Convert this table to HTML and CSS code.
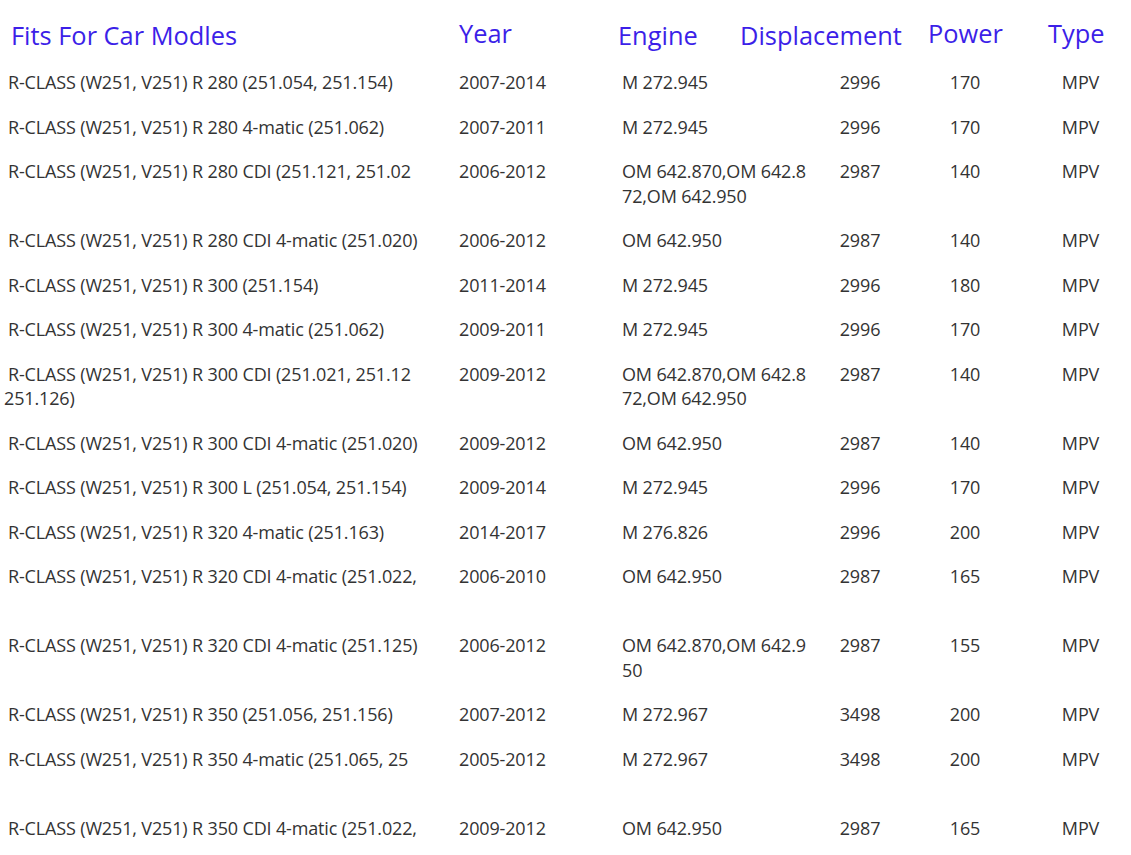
FILE: index.html
```html
<!DOCTYPE html>
<html>
<head>
<meta charset="utf-8">
<link rel="stylesheet" href="styles.css">
</head>
<body>
<div class="fits">
  <div class="head">
    <div class="h h-model">Fits For Car Modles</div>
    <div class="h h-year">Year</div>
    <div class="h h-engine">Engine</div>
    <div class="h h-disp">Displacement</div>
    <div class="h h-power">Power</div>
    <div class="h h-type">Type</div>
  </div>

  <div class="row"><div class="model">R-CLASS (W251, V251) R 280 (251.054, 251.154)</div><div class="year">2007-2014</div><div class="engine">M 272.945</div><div class="disp">2996</div><div class="power">170</div><div class="type">MPV</div></div>
  <div class="row"><div class="model">R-CLASS (W251, V251) R 280 4-matic (251.062)</div><div class="year">2007-2011</div><div class="engine">M 272.945</div><div class="disp">2996</div><div class="power">170</div><div class="type">MPV</div></div>
  <div class="row"><div class="model">R-CLASS (W251, V251) R 280 CDI (251.121, 251.02</div><div class="year">2006-2012</div><div class="engine">OM 642.870,OM 642.8<br>72,OM 642.950</div><div class="disp">2987</div><div class="power">140</div><div class="type">MPV</div></div>
  <div class="row"><div class="model">R-CLASS (W251, V251) R 280 CDI 4-matic (251.020)</div><div class="year">2006-2012</div><div class="engine">OM 642.950</div><div class="disp">2987</div><div class="power">140</div><div class="type">MPV</div></div>
  <div class="row"><div class="model">R-CLASS (W251, V251) R 300 (251.154)</div><div class="year">2011-2014</div><div class="engine">M 272.945</div><div class="disp">2996</div><div class="power">180</div><div class="type">MPV</div></div>
  <div class="row"><div class="model">R-CLASS (W251, V251) R 300 4-matic (251.062)</div><div class="year">2009-2011</div><div class="engine">M 272.945</div><div class="disp">2996</div><div class="power">170</div><div class="type">MPV</div></div>
  <div class="row"><div class="model wrapped"><span class="lead">R-CLASS (W251, V251) R 300 CDI (251.021, 251.12</span><br>251.126)</div><div class="year">2009-2012</div><div class="engine">OM 642.870,OM 642.8<br>72,OM 642.950</div><div class="disp">2987</div><div class="power">140</div><div class="type">MPV</div></div>
  <div class="row"><div class="model">R-CLASS (W251, V251) R 300 CDI 4-matic (251.020)</div><div class="year">2009-2012</div><div class="engine">OM 642.950</div><div class="disp">2987</div><div class="power">140</div><div class="type">MPV</div></div>
  <div class="row"><div class="model">R-CLASS (W251, V251) R 300 L (251.054, 251.154)</div><div class="year">2009-2014</div><div class="engine">M 272.945</div><div class="disp">2996</div><div class="power">170</div><div class="type">MPV</div></div>
  <div class="row"><div class="model">R-CLASS (W251, V251) R 320 4-matic (251.163)</div><div class="year">2014-2017</div><div class="engine">M 276.826</div><div class="disp">2996</div><div class="power">200</div><div class="type">MPV</div></div>
  <div class="row"><div class="model">R-CLASS (W251, V251) R 320 CDI 4-matic (251.022,<br>&nbsp;</div><div class="year">2006-2010</div><div class="engine">OM 642.950</div><div class="disp">2987</div><div class="power">165</div><div class="type">MPV</div></div>
  <div class="row"><div class="model">R-CLASS (W251, V251) R 320 CDI 4-matic (251.125)</div><div class="year">2006-2012</div><div class="engine">OM 642.870,OM 642.9<br>50</div><div class="disp">2987</div><div class="power">155</div><div class="type">MPV</div></div>
  <div class="row"><div class="model">R-CLASS (W251, V251) R 350 (251.056, 251.156)</div><div class="year">2007-2012</div><div class="engine">M 272.967</div><div class="disp">3498</div><div class="power">200</div><div class="type">MPV</div></div>
  <div class="row"><div class="model">R-CLASS (W251, V251) R 350 4-matic (251.065, 25<br>&nbsp;</div><div class="year">2005-2012</div><div class="engine">M 272.967</div><div class="disp">3498</div><div class="power">200</div><div class="type">MPV</div></div>
  <div class="row"><div class="model">R-CLASS (W251, V251) R 350 CDI 4-matic (251.022,</div><div class="year">2009-2012</div><div class="engine">OM 642.950</div><div class="disp">2987</div><div class="power">165</div><div class="type">MPV</div></div>
</div>
</body>
</html>
```

FILE: styles.css
```css
html, body {
  margin: 0;
  padding: 0;
  background: #ffffff;
}

body {
  font-family: "Open Sans", "Noto Sans", "Liberation Sans", sans-serif;
  color: #333333;
}

.fits {
  width: 1131px;
}

.head {
  display: grid;
  grid-template-columns: 448px 159px 122px 188px 120px 1fr;
  height: 60px;
  padding-left: 11px;
  align-items: center;
}

.h {
  font-size: 25.4px;
  color: #3c1fe8;
  white-space: nowrap;
  line-height: 30px;
}

.h-model,
.h-engine,
.h-disp {
  padding-top: 9px;
}

.h-year,
.h-power,
.h-type {
  padding-top: 5px;
}

.row {
  display: grid;
  grid-template-columns: 451px 163px 198px 80px 130px 1fr;
  padding-left: 8px;
  font-size: 18px;
  letter-spacing: -0.15px;
  line-height: 24.5px;
}

.row > div {
  padding: 10px 0;
  white-space: nowrap;
}

.model.wrapped {
  margin-left: -4px;
}

.lead {
  padding-left: 4px;
}

.disp,
.power,
.type {
  text-align: center;
}

.type {
  padding-right: 9px;
}
```
